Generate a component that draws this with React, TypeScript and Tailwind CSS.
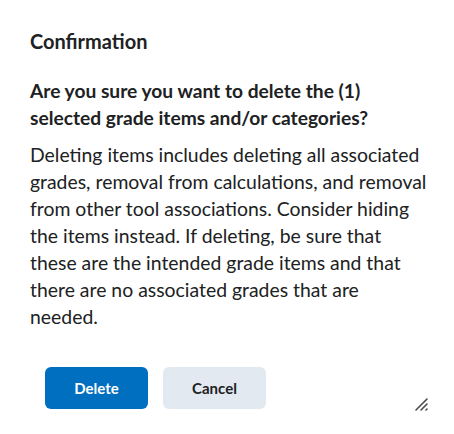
import React from "react";

export default function App() {
  return (
    <div className="relative w-[454px] h-[434px] bg-white text-[#202122]" style={{ fontFamily: "Lato, 'Noto Sans', sans-serif" }}>
      <div className="pl-[30px] pt-[28px]">
        <h1 className="text-[20px] leading-[27px] font-bold">Confirmation</h1>
        <p className="mt-[22px] whitespace-nowrap text-[19.2px] leading-[27px] font-bold">
          Are you sure you want to delete the (1)
          <br />
          selected grade items and/or categories?
        </p>
        <p className="mt-[10px] whitespace-nowrap text-[19.4px] leading-[27px]">
          Deleting items includes deleting all associated
          <br />
          grades, removal from calculations, and removal
          <br />
          from other tool associations. Consider hiding
          <br />
          the items instead. If deleting, be sure that
          <br />
          these are the intended grade items and that
          <br />
          there are no associated grades that are
          <br />
          needed.
        </p>
      </div>
      <div className="flex gap-[15px] pl-[45px] mt-[37px]">
        <button className="w-[103px] h-[42px] rounded-[6px] bg-[#006fbf] text-white text-[15px] font-bold">Delete</button>
        <button className="w-[103px] h-[42px] rounded-[6px] bg-[#e3e9f1] text-[#202122] text-[15px] font-bold">Cancel</button>
      </div>
      <svg className="absolute left-[414px] top-[396px]" width="16" height="16" viewBox="0 0 16 16">
        <path d="M2 14 L13 3 M7 14 L13 8 M12 14 L13 13" stroke="#494c4e" strokeWidth="1.6" strokeLinecap="round" />
      </svg>
    </div>
  );
}
